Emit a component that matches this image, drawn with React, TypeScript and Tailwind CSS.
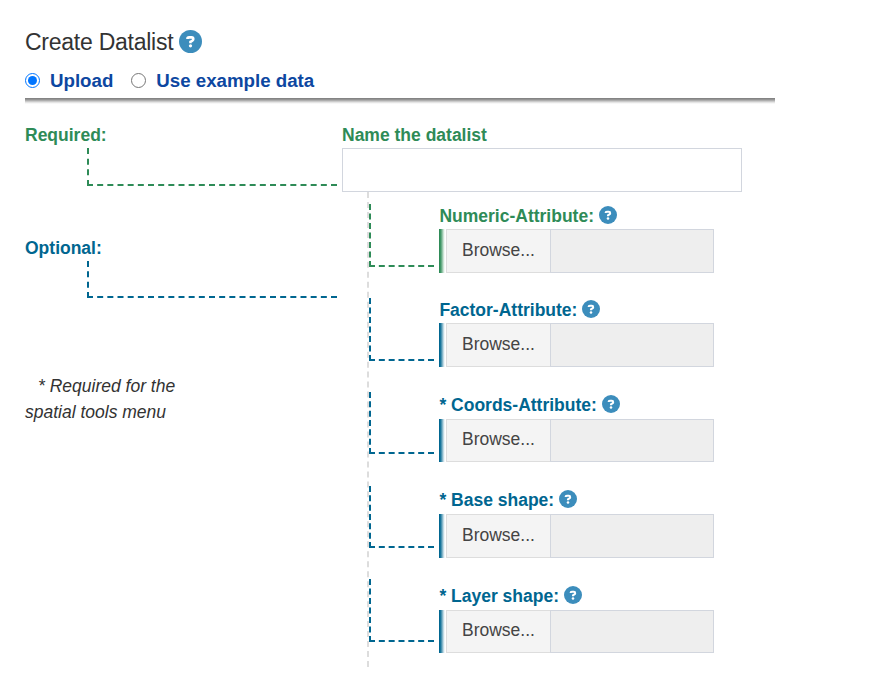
type Field = { label: string; tone: string; strip: string; height: string; labelBox: string; textLine: string };

const GREEN_STRIP = "bg-[linear-gradient(to_right,#2e8b57_0px,#2e8b57_1px,#51a073_2px,#7db896_3px,#b4d6c2_4px,#e3f0e8_5px,#fff_6px)]";
const BLUE_STRIP = "bg-[linear-gradient(to_right,#006690_0px,#006690_1px,#2f83a5_2px,#66a3bc_3px,#a6cad8_4px,#deebf0_5px,#fff_6px)]";

const fields: Field[] = [
  { label: "Numeric-Attribute:", tone: "text-[#2e8b57]", strip: GREEN_STRIP, height: "h-[44px]", labelBox: "h-[37px] pt-[10px]", textLine: "leading-[40px]" },
  { label: "Factor-Attribute:", tone: "text-[#006690]", strip: BLUE_STRIP, height: "h-[44px]", labelBox: "h-[50px] pt-[23px]", textLine: "leading-[40px]" },
  { label: "* Coords-Attribute:", tone: "text-[#006690]", strip: BLUE_STRIP, height: "h-[43px]", labelBox: "h-[52px] pt-[24px]", textLine: "leading-[38px]" },
  { label: "* Base shape:", tone: "text-[#006690]", strip: BLUE_STRIP, height: "h-[44px]", labelBox: "h-[52px] pt-[24px]", textLine: "leading-[40px]" },
  { label: "* Layer shape:", tone: "text-[#006690]", strip: BLUE_STRIP, height: "h-[43px]", labelBox: "h-[52px] pt-[24px]", textLine: "leading-[38px]" },
];

const connectors = [
  "mt-[12px] h-[63px] border-[#2e8b57]",
  "mt-[31px] h-[63px] border-[#006690]",
  "mt-[31px] h-[62px] border-[#006690]",
  "mt-[32px] h-[62px] border-[#006690]",
  "mt-[31px] h-[63px] border-[#006690]",
];

function HelpIcon({ className }: { className: string }) {
  return (
    <svg viewBox="0 0 512 512" className={className} aria-label="Help">
      <circle cx="256" cy="256" r="256" fill="#3c8dbc" />
      <path
        d="M188 198C188 178 204 165 224 165H280C302 165 318 182 318 203C318 219 310 231 297 239L256 263V294"
        fill="none"
        stroke="#fff"
        strokeWidth="58"
      />
      <circle cx="256" cy="353" r="36" fill="#fff" />
    </svg>
  );
}

function FileField({ label, tone, strip, height, labelBox, textLine }: Field) {
  return (
    <div>
      <div className={`flex items-start gap-[5px] ${labelBox} ${tone}`}>
        <span className="whitespace-nowrap pl-[0.4px] font-bold leading-[28px]">{label}</span>
        <HelpIcon className="mt-[4px] size-[18px] shrink-0" />
      </div>
      <div className={`flex ${height}`}>
        <div className={`w-[7px] ${strip}`} />
        <div className={`w-[104px] border border-r-0 border-[#ddd] bg-[#f4f4f4] pl-[15px] text-[#444] ${textLine}`}>Browse...</div>
        <div className="w-[164px] border border-[#d2d6de] bg-[#eee]" />
      </div>
    </div>
  );
}

export default function App() {
  return (
    <main className="h-[675px] overflow-hidden bg-white pl-[25px] pt-[26px] font-['Liberation_Sans',Arial,sans-serif] text-[17.5px] text-[#333]">
      <div className="flex h-[32px] items-center gap-[6px]">
        <h1 className="whitespace-nowrap text-[23px] leading-[32px] tracking-[-0.25px]">Create Datalist</h1>
        <HelpIcon className="-mt-px size-[23px]" />
      </div>
      <div className="mt-[9px] flex h-[27px] items-center text-[18.7px] font-bold text-[#0d47a1]">
        <input type="radio" name="source" defaultChecked className="size-[15px]" />
        <span className="ml-[10px] pt-px">Upload</span>
        <input type="radio" name="source" className="ml-[18px] size-[15px]" />
        <span className="ml-[10px] pt-px">Use example data</span>
      </div>
      <div className="mt-[4px] h-[6px] w-[750px] bg-[linear-gradient(to_bottom,#808080_0px,#888_1px,#a0a0a0_2px,#bcbcbc_3px,#dadada_4px,#f0f0f0_5px,#fff_6px)]" />
      <div className="mt-[17px] flex">
        <section className="w-[317px]">
          <div className="h-[27px] font-bold leading-[28px] text-[#2e8b57]">Required:</div>
          <div className="ml-[62px] h-[38px] w-[250px] border-b-2 border-l-2 border-dashed border-[#2e8b57]" />
          <div className="mt-[48px] h-[27px] font-bold leading-[28px] text-[#006690]">Optional:</div>
          <div className="ml-[62px] h-[37px] w-[250px] border-b-2 border-l-2 border-dashed border-[#006690]" />
          <p className="mt-[75px] w-[180px] indent-[13px] italic leading-[26px]">
            * Required for the
            <br />
            spatial tools menu
          </p>
        </section>
        <section>
          <div className="h-[27px] font-bold leading-[28px] text-[#2e8b57]">Name the datalist</div>
          <div className="h-[44px] w-[400px] border border-[#d2d6de]" />
          <div className="ml-[25px] flex h-[475px] border-l-2 border-dashed border-[#ddd]">
            <div className="w-[70px]">
              {connectors.map((c, i) => (
                <div key={i} className={`w-[65px] border-b-2 border-l-2 border-dashed ${c}`} />
              ))}
            </div>
            <div>
              {fields.map((f) => (
                <FileField key={f.label} {...f} />
              ))}
            </div>
          </div>
        </section>
      </div>
    </main>
  );
}
